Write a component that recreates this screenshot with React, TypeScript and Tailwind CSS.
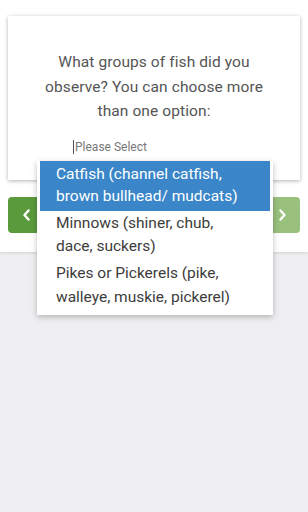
import React from "react";

function Chevron({ dir }: { dir: "left" | "right" }) {
  return (
    <svg width="7" height="12" viewBox="0 0 7 12" fill="none">
      <path
        d={dir === "left" ? "M5.5 1.5 L1.5 6 L5.5 10.5" : "M1.5 1.5 L5.5 6 L1.5 10.5"}
        stroke="white"
        strokeWidth="2.4"
        strokeLinecap="round"
        strokeLinejoin="round"
      />
    </svg>
  );
}

export default function App() {
  const font = { fontFamily: "Roboto, 'Noto Sans', sans-serif" };
  return (
    <div className="relative w-[308px] h-[512px] bg-[#efeef0] overflow-hidden" style={font}>
      <div className="bg-white px-2 pt-4 pb-[19px] shadow-[0_1px_3px_rgba(0,0,0,0.12)]">
        <div className="h-[164px] bg-white shadow-[0_1px_4px_rgba(0,0,0,0.3)] pt-[34px] flex flex-col items-center">
          <p className="text-[15.5px] leading-[24.5px] text-[#555] text-center px-8 font-normal tracking-[0.1px]">
            What groups of fish did you observe? You can choose more than one option:
          </p>
          <div className="self-start ml-[65px] mt-[15px] flex items-center">
            <span className="w-px h-[14px] bg-[#555] mr-px" />
            <span className="text-[12px] leading-[16px] text-[#777]">Please Select</span>
          </div>
        </div>
        <div className="mt-[17px] flex justify-between">
          <button className="h-9 w-[96px] bg-[#5b9a3c] flex items-center pl-[15px] rounded-sm">
            <Chevron dir="left" />
          </button>
          <button className="h-9 w-[96px] bg-[#9ac07d] flex items-center justify-end pr-[14px] rounded-sm">
            <Chevron dir="right" />
          </button>
        </div>
      </div>

      <div className="absolute left-[37px] top-[161px] w-[236px] bg-white shadow-[0_2px_6px_rgba(0,0,0,0.25)] px-[3px] pb-[6px]">
        <div className="bg-[#3a86c8] text-white text-[15.5px] leading-[22px] pl-[16px] pr-[24px] pt-[2px] pb-[4px]">
          Catfish (channel catfish, brown bullhead/ mudcats)
        </div>
        <div className="text-[#3c3c3c] text-[15.5px] leading-[23px] pl-[16px] pr-[24px] pt-[1px] pb-[2px]">
          Minnows (shiner, chub, dace, suckers)
        </div>
        <div className="text-[#3c3c3c] text-[15.5px] leading-[24px] pl-[16px] pr-[24px] pt-[1px]">
          Pikes or Pickerels (pike, walleye, muskie, pickerel)
        </div>
      </div>
    </div>
  );
}
